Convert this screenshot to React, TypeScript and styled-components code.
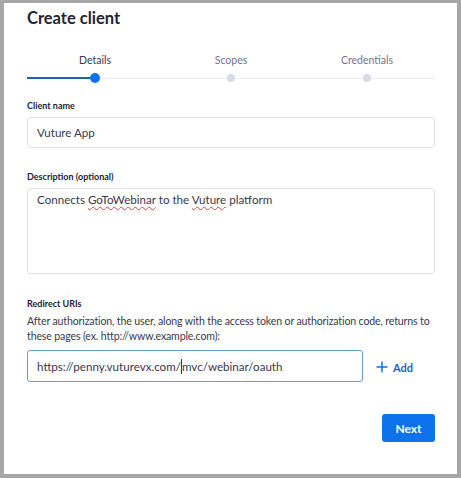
import styled, { createGlobalStyle } from "styled-components";

const BLUE = "#0e72ed";

const GlobalStyle = createGlobalStyle`
  html, body {
    margin: 0;
    padding: 0;
    background: #a7a7a7;
    font-family: Lato, "Open Sans", sans-serif;
  }
`;

const steps = ["Details", "Scopes", "Credentials"];

const CreateClient = () => {
  const current = 0;
  return (
    <Panel>
      <Title>Create client</Title>
      <Stepper>
        {steps.map((s, i) => (
          <Step key={s}>
            <StepLabel active={i === current}>{s}</StepLabel>
            <Rail>
              <Segment done={i <= current} />
              <Dot active={i === current} />
              <Segment done={i < current} />
            </Rail>
          </Step>
        ))}
      </Stepper>

      <FieldLabel>Client name</FieldLabel>
      <TextBox>Vuture App</TextBox>

      <FieldLabel style={{ marginTop: 23 }}>Description (optional)</FieldLabel>
      <TextArea>
        Connects <Misspelled>GoToWebinar</Misspelled> to the{" "}
        <Misspelled>Vuture</Misspelled> platform
      </TextArea>

      <FieldLabel style={{ marginTop: 24 }}>Redirect URIs</FieldLabel>
      <Helper>
        After authorization, the user, along with the access token or
        authorization code, returns to these pages (ex. http://www.example.com):
      </Helper>
      <UriRow>
        <UriBox>
          https://penny.vuturevx.com/
          <Caret />
          mvc/webinar/oauth
        </UriBox>
        <AddButton>
          <svg width="12" height="12" viewBox="0 0 12 12">
            <path d="M6 0.5v11M0.5 6h11" stroke={BLUE} strokeWidth="1.5" />
          </svg>
          Add
        </AddButton>
      </UriRow>

      <Footer>
        <NextButton>Next</NextButton>
      </Footer>
    </Panel>
  );
};

const Panel = styled.div`
  margin: 3px 4px 4px 4px;
  height: 471px;
  box-sizing: border-box;
  background: #fff;
  padding: 4px 22px 0 23px;
  display: flex;
  flex-direction: column;
`;

const Title = styled.h1`
  margin: 0;
  font-size: 16.5px;
  line-height: 22px;
  font-weight: 700;
  color: #232333;
`;

const Stepper = styled.div`
  display: grid;
  grid-template-columns: repeat(3, 1fr);
  margin-top: 24px;
`;

const Step = styled.div`
  display: flex;
  flex-direction: column;
  align-items: center;
  gap: 6px;
`;

const StepLabel = styled.div<{ active?: boolean }>`
  font-size: 10.5px;
  line-height: 14px;
  color: ${(p) => (p.active ? "#39394d" : "#747487")};
`;

const Rail = styled.div`
  width: 100%;
  height: 10px;
  display: flex;
  align-items: center;
`;

const Segment = styled.div<{ done?: boolean }>`
  flex: 1;
  height: ${(p) => (p.done ? "2px" : "1px")};
  background: ${(p) => (p.done ? "#1f63b8" : "#ebebef")};
`;

const Dot = styled.div<{ active?: boolean }>`
  width: ${(p) => (p.active ? "10px" : "8px")};
  height: ${(p) => (p.active ? "10px" : "8px")};
  border-radius: 50%;
  background: ${(p) => (p.active ? BLUE : "#d6dbe6")};
`;

const FieldLabel = styled.div`
  margin-top: 17px;
  font-size: 9px;
  line-height: 12px;
  font-weight: 700;
  color: #232333;
`;

const TextBox = styled.div`
  margin-top: 5px;
  height: 31px;
  box-sizing: border-box;
  border: 1px solid #e2e2e6;
  border-radius: 3px;
  padding: 0 9px;
  display: flex;
  align-items: center;
  font-size: 11.6px;
  color: #39394d;
`;

const TextArea = styled.div`
  margin-top: 5px;
  height: 86px;
  box-sizing: border-box;
  border: 1px solid #e2e2e6;
  border-radius: 3px;
  padding: 3px 9px;
  font-size: 11.6px;
  line-height: 16px;
  color: #39394d;
`;

const Misspelled = styled.span`
  text-decoration: underline wavy #d04a4a;
  text-decoration-thickness: 1px;
  text-underline-offset: 2px;
`;

const Helper = styled.p`
  margin: 4px 0 0;
  font-size: 10.6px;
  letter-spacing: -0.15px;
  line-height: 15px;
  color: #39394d;
`;

const UriRow = styled.div`
  margin-top: 6px;
  display: flex;
  align-items: center;
`;

const UriBox = styled(TextBox)`
  margin-top: 0;
  width: 336px;
  height: 32px;
  border-color: #6b99d6;
  font-size: 11.6px;
`;

const Caret = styled.span`
  display: inline-block;
  width: 1px;
  height: 15px;
  background: #39394d;
`;

const AddButton = styled.button`
  margin-left: 13px;
  margin-top: 2px;
  border: 0;
  background: none;
  padding: 0;
  display: flex;
  align-items: center;
  gap: 5px;
  font-family: inherit;
  font-size: 11px;
  font-weight: 700;
  color: #1f5fb8;
`;

const Footer = styled.div`
  margin-top: 32px;
  display: flex;
  justify-content: flex-end;
`;

const NextButton = styled.button`
  width: 53px;
  height: 28px;
  border: 0;
  border-radius: 3px;
  background: ${BLUE};
  color: #fff;
  font-family: inherit;
  font-size: 12px;
  font-weight: 700;
`;

const App = () => (
  <>
    <GlobalStyle />
    <CreateClient />
  </>
);

export default App;
